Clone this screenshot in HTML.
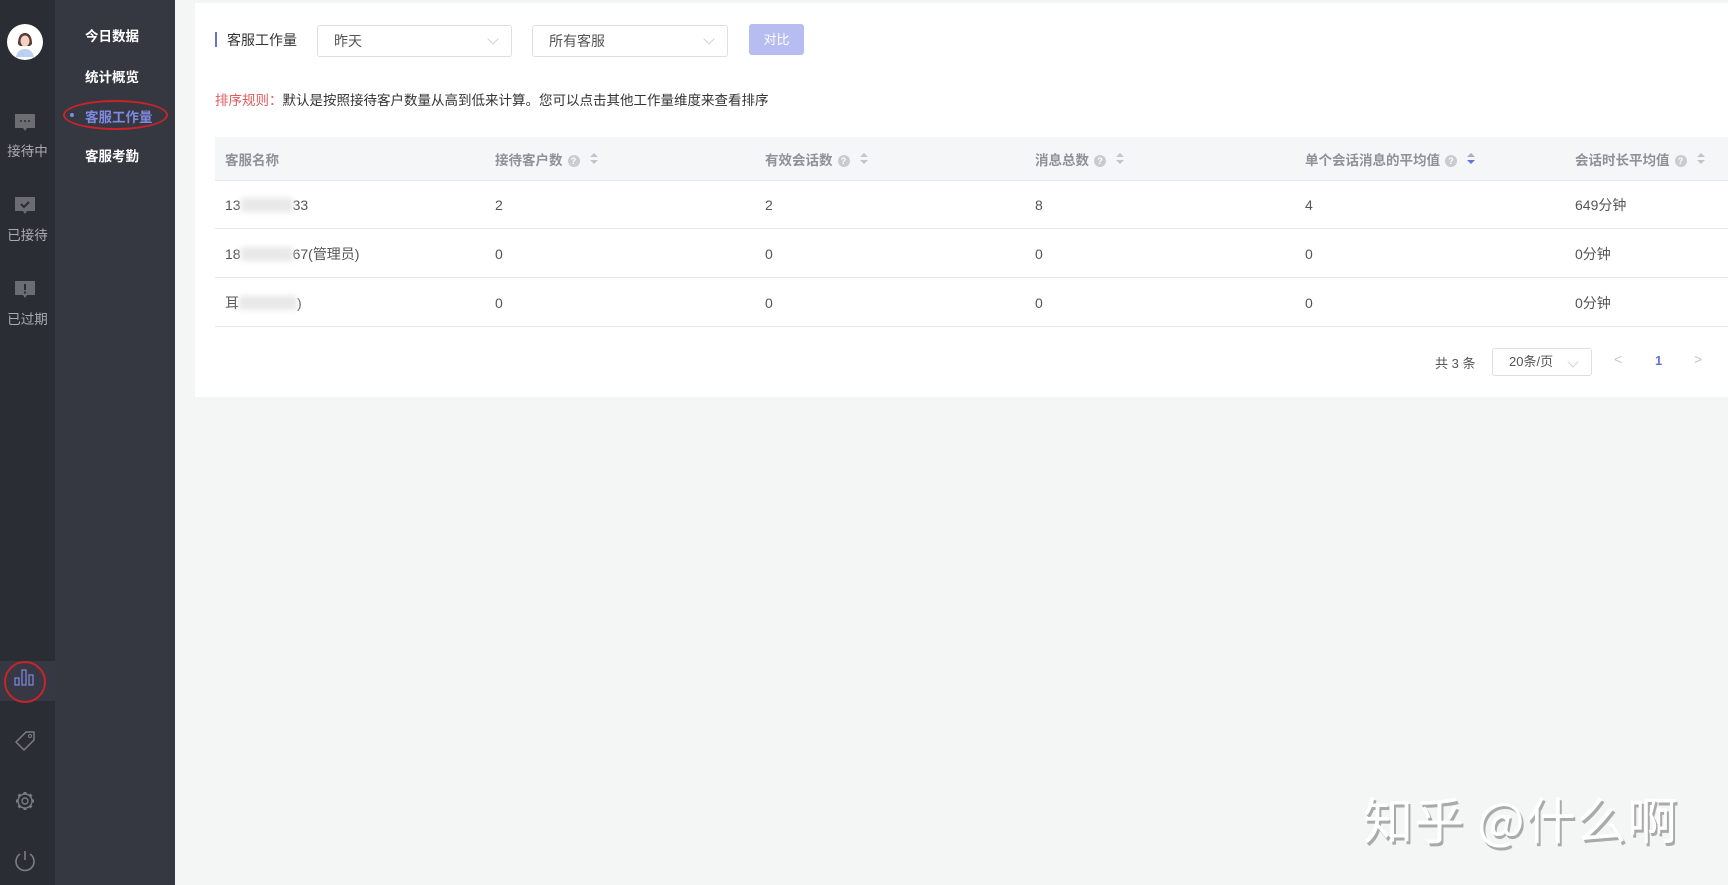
<!DOCTYPE html>
<html><head><meta charset="utf-8"><style>
*{margin:0;padding:0;box-sizing:border-box}
body{width:1728px;height:885px;background:#f4f5f5;font-family:"Liberation Sans","Noto Sans CJK SC",sans-serif;font-size:14px;color:#444;position:relative;overflow:hidden}
.rail{position:absolute;left:0;top:0;width:55px;height:885px;background:#2b2d34}
.sub{position:absolute;left:55px;top:0;width:120px;height:885px;background:#353741}
.sub div{position:absolute;left:30px;color:#fff;font-size:13.5px;font-weight:bold}
.lbl{position:absolute;left:0;width:55px;text-align:center;color:#a9abb0;font-size:13.5px}
.card{position:absolute;left:195px;top:3px;width:1533px;height:394px;background:#fff}
.a{position:absolute}
.sel{position:absolute;height:32px;border:1px solid #dcdfe6;border-radius:3px;padding-left:16px;line-height:30px;color:#555}
.sel:after{content:"";position:absolute;right:14px;top:9px;width:7px;height:7px;border-right:1px solid #d0d3d9;border-bottom:1px solid #d0d3d9;transform:rotate(45deg)}
.th{position:absolute;top:137px;left:215px;width:1513px;height:44px;background:#f5f6f8;border-bottom:1px solid #e8e8e8}
.row{position:absolute;left:215px;width:1513px;height:48px;border-bottom:1px solid #e8e8e8;color:#555}
.c{position:absolute;top:50%;transform:translateY(-50%);white-space:nowrap}
.h{color:#8d9198;font-weight:bold;font-size:13.5px}
.q{display:inline-block;width:12px;height:12px;border-radius:50%;background:#c9cbcf;color:#fff;font-size:9px;text-align:center;line-height:12px;margin-left:5px;vertical-align:1px}
.s{display:inline-block;margin-left:10px;vertical-align:0;width:8px;height:12px;position:relative}
.s:before,.s:after{content:"";position:absolute;left:0;border-left:4px solid transparent;border-right:4px solid transparent}
.s:before{top:0;border-bottom:4px solid #c0c4cc}
.s:after{top:7px;border-top:4px solid #c0c4cc}
.s.on:after{border-top-color:#6673d3}
.s.on:before{border-bottom-color:#a7acd0}
.blur{display:inline-block;width:52px;height:14px;background:#e8e8e8;filter:blur(3px);vertical-align:-2px}
.wm{position:absolute;left:1363px;top:782px;font-size:50px;color:#fff;text-shadow:2px 3px 0 #aaa;letter-spacing:1px;font-family:"Noto Sans CJK SC",sans-serif}
</style></head><body>
<div class="rail">
  <svg class="a" style="left:7px;top:24px" width="36" height="36" viewBox="0 0 36 36"><circle cx="18" cy="18" r="18" fill="#fff"/><path d="M11 20c0-8 3-11 7-11s7 3 7 11l-2 2H13z" fill="#5a3a33"/><ellipse cx="18" cy="17" rx="4.5" ry="5.5" fill="#f4d2c2"/><path d="M9 33c1-6 5-8 9-8s8 2 9 8z" fill="#bcd0f0"/></svg>
  <svg class="a" style="left:14px;top:112px" width="22" height="22" viewBox="0 0 22 22"><path d="M1 2h20v14H13l-2 3-2-3H1z" fill="#6b6d72"/><circle cx="7" cy="9" r="1" fill="#2b2d34"/><circle cx="11" cy="9" r="1" fill="#2b2d34"/><circle cx="15" cy="9" r="1" fill="#2b2d34"/></svg>
  <div class="lbl" style="top:140px">接待中</div>
  <svg class="a" style="left:14px;top:195px" width="22" height="22" viewBox="0 0 22 22"><path d="M1 2h20v14H13l-2 3-2-3H1z" fill="#6b6d72"/><path d="M7 9l3 3 5-5" stroke="#2b2d34" stroke-width="2" fill="none"/></svg>
  <div class="lbl" style="top:224px">已接待</div>
  <svg class="a" style="left:14px;top:279px" width="22" height="22" viewBox="0 0 22 22"><path d="M1 2h20v14H13l-2 3-2-3H1z" fill="#6b6d72"/><rect x="10" y="5" width="2" height="6" fill="#2b2d34"/><rect x="10" y="12.5" width="2" height="2" fill="#2b2d34"/></svg>
  <div class="lbl" style="top:308px">已过期</div>
  <div class="a" style="left:0;top:661px;width:55px;height:40px;background:#363843"></div>
  <svg class="a" style="left:4px;top:661px" width="46" height="43" viewBox="0 0 46 43"><ellipse cx="21" cy="21" rx="20" ry="20" fill="none" stroke="#c8242a" stroke-width="2"/><rect x="11" y="17" width="4" height="7" fill="none" stroke="#7f8ae0" stroke-width="1.2"/><rect x="18" y="9" width="4" height="15" fill="none" stroke="#7f8ae0" stroke-width="1.2"/><rect x="25" y="14" width="4" height="10" fill="none" stroke="#7f8ae0" stroke-width="1.2"/></svg>
  <svg class="a" style="left:14px;top:730px" width="22" height="22" viewBox="0 0 22 22"><path d="M12 2h8v8L10 20 2 12z" fill="none" stroke="#7b7d82" stroke-width="1.5" stroke-linejoin="round"/><circle cx="16" cy="6" r="1.5" fill="none" stroke="#7b7d82"/></svg>
  <svg class="a" style="left:14px;top:790px" width="22" height="22" viewBox="0 0 22 22"><g stroke="#7b7d82" stroke-width="3" stroke-linecap="butt"><path d="M11 2v18M2 11h18M4.6 4.6l12.8 12.8M17.4 4.6L4.6 17.4"/></g><circle cx="11" cy="11" r="7" fill="#2b2d34" stroke="#7b7d82" stroke-width="1.4"/><circle cx="11" cy="11" r="3" fill="none" stroke="#7b7d82" stroke-width="1.4"/></svg>
  <svg class="a" style="left:13px;top:849px" width="24" height="24" viewBox="0 0 24 24"><path d="M7 5a9 9 0 1 0 10 0" fill="none" stroke="#7b7d82" stroke-width="1.6"/><path d="M12 2v9" stroke="#7b7d82" stroke-width="1.6"/></svg>
</div>
<div class="sub">
  <div style="top:25px">今日数据</div>
  <div style="top:66px">统计概览</div>
  <div style="top:106px;color:#7f8ae0">客服工作量</div>
  <div style="top:145px">客服考勤</div>
  <div class="a" style="left:15px;top:113px;width:4px;height:4px;border-radius:50%;background:#7f8ae0"></div>
  <div class="a" style="left:8px;top:100px;width:105px;height:30px;border:2px solid #c8242a;border-radius:50%"></div>
</div>
<div class="card"></div>
<div class="a" style="left:215px;top:32px;width:2px;height:15px;background:#6673d3"></div>
<div class="a" style="left:227px;top:30px;font-size:14px;color:#333">客服工作量</div>
<div class="sel" style="left:317px;top:25px;width:195px">昨天</div>
<div class="sel" style="left:532px;top:25px;width:196px">所有客服</div>
<div class="a" style="left:749px;top:24px;width:55px;height:31px;background:#b7bdf0;border-radius:3px;color:#fff;text-align:center;line-height:31px;font-size:13px">对比</div>
<div class="a" style="left:215px;top:89px;font-size:13.5px;color:#333"><span style="color:#e05a5a">排序规则：</span>默认是按照接待客户数量从高到低来计算。您可以点击其他工作量维度来查看排序</div>
<div class="th">
  <span class="c h" style="left:10px">客服名称</span>
  <span class="c h" style="left:280px">接待客户数<span class="q">?</span><span class="s"></span></span>
  <span class="c h" style="left:550px">有效会话数<span class="q">?</span><span class="s"></span></span>
  <span class="c h" style="left:820px">消息总数<span class="q">?</span><span class="s"></span></span>
  <span class="c h" style="left:1090px">单个会话消息的平均值<span class="q">?</span><span class="s on"></span></span>
  <span class="c h" style="left:1360px">会话时长平均值<span class="q">?</span><span class="s"></span></span>
</div>
<div class="row" style="top:181px"><span class="c" style="left:10px">13<span class="blur"></span>33</span><span class="c" style="left:280px">2</span><span class="c" style="left:550px">2</span><span class="c" style="left:820px">8</span><span class="c" style="left:1090px">4</span><span class="c" style="left:1360px">649分钟</span></div>
<div class="row" style="top:230px"><span class="c" style="left:10px">18<span class="blur"></span>67(管理员)</span><span class="c" style="left:280px">0</span><span class="c" style="left:550px">0</span><span class="c" style="left:820px">0</span><span class="c" style="left:1090px">0</span><span class="c" style="left:1360px">0分钟</span></div>
<div class="row" style="top:279px"><span class="c" style="left:10px">耳<span class="blur" style="width:58px"></span>)</span><span class="c" style="left:280px">0</span><span class="c" style="left:550px">0</span><span class="c" style="left:820px">0</span><span class="c" style="left:1090px">0</span><span class="c" style="left:1360px">0分钟</span></div>
<div class="a" style="left:1435px;top:353px;font-size:13px;color:#555">共 3 条</div>
<div class="sel" style="left:1492px;top:348px;width:100px;height:28px;line-height:26px;font-size:13px">20条/页</div>
<div class="a" style="left:1614px;top:351px;color:#c0c4cc;font-size:14px">&lt;</div>
<div class="a" style="left:1655px;top:353px;color:#6673d3;font-size:13px;font-weight:bold">1</div>
<div class="a" style="left:1694px;top:351px;color:#c0c4cc;font-size:14px">&gt;</div>
<div class="wm">知乎 @什么啊</div>
</body></html>
